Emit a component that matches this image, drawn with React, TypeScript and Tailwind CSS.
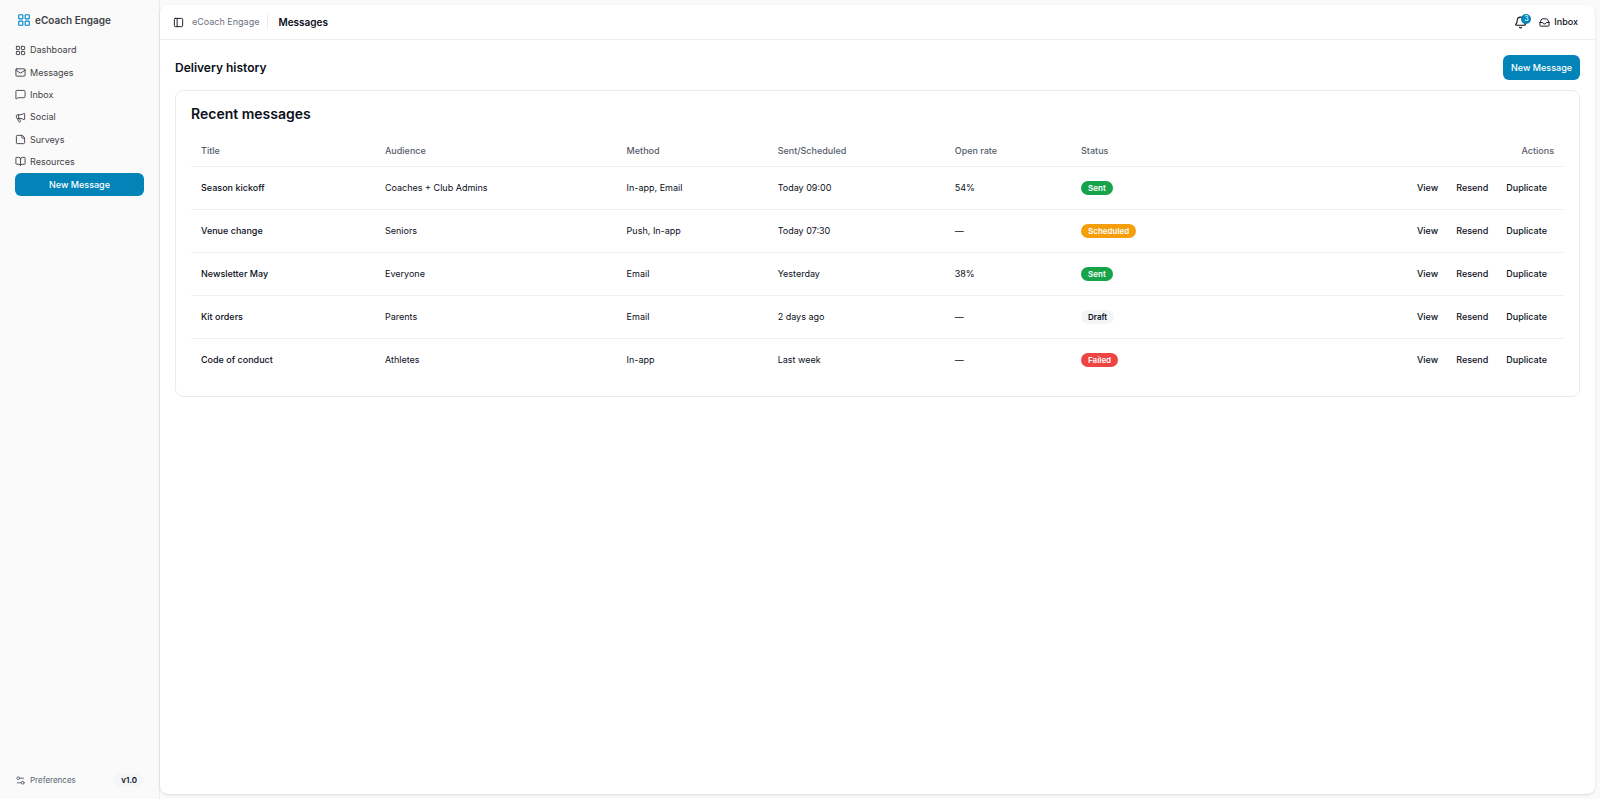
import React from 'react';
import { BookOpen, Bell, Inbox, LayoutGrid, Mail, Megaphone, MessageSquare, PanelLeft, Settings2, StickyNote } from 'lucide-react';

type Status = 'Sent' | 'Scheduled' | 'Draft' | 'Failed';

interface Message {
    title: string;
    audience: string;
    method: string;
    sent: string;
    openRate: string;
    status: Status;
}

const navItems = [
    { label: 'Dashboard', icon: LayoutGrid },
    { label: 'Messages', icon: Mail },
    { label: 'Inbox', icon: MessageSquare },
    { label: 'Social', icon: Megaphone },
    { label: 'Surveys', icon: StickyNote },
    { label: 'Resources', icon: BookOpen },
];

const messages: Message[] = [
    { title: 'Season kickoff', audience: 'Coaches + Club Admins', method: 'In-app, Email', sent: 'Today 09:00', openRate: '54%', status: 'Sent' },
    { title: 'Venue change', audience: 'Seniors', method: 'Push, In-app', sent: 'Today 07:30', openRate: '—', status: 'Scheduled' },
    { title: 'Newsletter May', audience: 'Everyone', method: 'Email', sent: 'Yesterday', openRate: '38%', status: 'Sent' },
    { title: 'Kit orders', audience: 'Parents', method: 'Email', sent: '2 days ago', openRate: '—', status: 'Draft' },
    { title: 'Code of conduct', audience: 'Athletes', method: 'In-app', sent: 'Last week', openRate: '—', status: 'Failed' },
];

const statusStyles: Record<Status, string> = {
    Sent: 'bg-[#16a34a] text-white',
    Scheduled: 'bg-[#f59e0b] text-white',
    Draft: 'bg-[#f3f5f7] text-[#0b0f1a]',
    Failed: 'bg-[#ef4444] text-white',
};

const Sidebar: React.FC = () => (
    <aside className="flex w-40 shrink-0 flex-col border-r border-[#ebebed] px-[15px] pt-3 pb-3">
        <a href="#" className="flex h-4 items-center gap-1 pl-0.5 text-[10px] font-semibold text-[#3f3f46]">
            <LayoutGrid size={14} className="text-[#0284c7]" />
            eCoach Engage
        </a>
        <nav className="mt-[11px] grid h-[134px] grid-rows-6">
            {navItems.map(({ label, icon: Icon }) => (
                <a key={label} href="#" className="flex items-center gap-1 text-[9px] text-[#3f3f46]">
                    <Icon size={11} />
                    {label}
                </a>
            ))}
        </nav>
        <button className="h-[23px] rounded-md bg-[#0284b9] text-[9px] font-medium text-white">New Message</button>
        <div className="mt-auto flex items-center justify-between">
            <a href="#" className="flex items-center gap-1 text-[8px] text-[#5b6472]">
                <Settings2 size={11} />
                Preferences
            </a>
            <span className="rounded-full bg-[#f4f6f9] px-[7px] text-[8px] leading-[14px] font-semibold text-[#0b0f1a]">v1.0</span>
        </div>
    </aside>
);

const TopBar: React.FC = () => (
    <header className="flex h-[35px] items-center border-b border-[#eceef0] pr-[17px] pl-[13px]">
        <button aria-label="Toggle sidebar" className="text-[#0b0f1a]">
            <PanelLeft size={11} />
        </button>
        <a href="#" className="ml-2 text-[9px] text-[#6b7280]">eCoach Engage</a>
        <span className="mr-2.5 ml-2 h-4 w-px bg-[#eceef0]" />
        <h1 className="text-[10px] font-semibold text-[#0b0f1a]">Messages</h1>
        <div className="ml-auto flex items-center gap-3 text-[#0b0f1a]">
            <button aria-label="Notifications" className="relative">
                <Bell size={13} />
                <span className="absolute -top-0.5 -right-1 flex h-[10px] w-[10px] items-center justify-center rounded-full bg-[#0284b9] text-[7px] leading-none text-white">3</span>
            </button>
            <a href="#" className="flex items-center gap-1 text-[9px] font-medium">
                <Inbox size={11} />
                Inbox
            </a>
        </div>
    </header>
);

const MessagesTable: React.FC = () => (
    <table className="w-full table-fixed text-left text-[9px] leading-3 text-[#0b0f1a]">
        <colgroup>
            <col className="w-[13.4%]" />
            <col className="w-[17.6%]" />
            <col className="w-[11%]" />
            <col className="w-[12.9%]" />
            <col className="w-[9.2%]" />
            <col />
            <col className="w-[20%]" />
        </colgroup>
        <thead>
            <tr className="h-[30px] border-b border-[#f0f1f4] text-[#565d6b]">
                <th className="px-2.5 font-medium">Title</th>
                <th className="px-2.5 font-medium">Audience</th>
                <th className="px-2.5 font-medium">Method</th>
                <th className="px-2.5 font-medium">Sent/Scheduled</th>
                <th className="px-2.5 font-medium">Open rate</th>
                <th className="px-2.5 font-medium">Status</th>
                <th className="px-2.5 text-right font-medium">Actions</th>
            </tr>
        </thead>
        <tbody>
            {messages.map((m) => (
                <tr key={m.title} className="h-[43px] border-b border-[#f0f1f4] last:border-0">
                    <td className="px-2.5 font-medium">{m.title}</td>
                    <td className="px-2.5">{m.audience}</td>
                    <td className="px-2.5">{m.method}</td>
                    <td className="px-2.5">{m.sent}</td>
                    <td className="px-2.5">{m.openRate}</td>
                    <td className="px-2.5">
                        <span className={`inline-block rounded-full px-[7px] text-[8px] leading-[14px] font-semibold ${statusStyles[m.status]}`}>
                            {m.status}
                        </span>
                    </td>
                    <td className="px-2.5">
                        <div className="flex justify-end gap-[18px] pr-[7px]">
                            <button className="font-medium">View</button>
                            <button className="font-medium">Resend</button>
                            <button className="font-medium">Duplicate</button>
                        </div>
                    </td>
                </tr>
            ))}
        </tbody>
    </table>
);

export default function App() {
    return (
        <div className="flex min-h-screen bg-[#fafafa] font-['Inter',sans-serif]">
            <Sidebar />
            <main className="my-[5px] mr-[5px] flex min-w-0 flex-1 flex-col rounded-lg bg-white shadow-sm">
                <TopBar />
                <div className="p-[15px]">
                    <div className="flex items-center justify-between">
                        <h2 className="text-xs font-semibold text-[#0b0f1a]">Delivery history</h2>
                        <button className="h-[25px] rounded-md bg-[#0284b9] px-2 text-[9px] font-medium text-white">New Message</button>
                    </div>
                    <section className="mt-2.5 rounded-lg border border-[#e8ebef] p-[15px]">
                        <h3 className="mb-3.5 text-sm leading-4 font-semibold text-[#0b0f1a]">Recent messages</h3>
                        <MessagesTable />
                    </section>
                </div>
            </main>
        </div>
    );
}
